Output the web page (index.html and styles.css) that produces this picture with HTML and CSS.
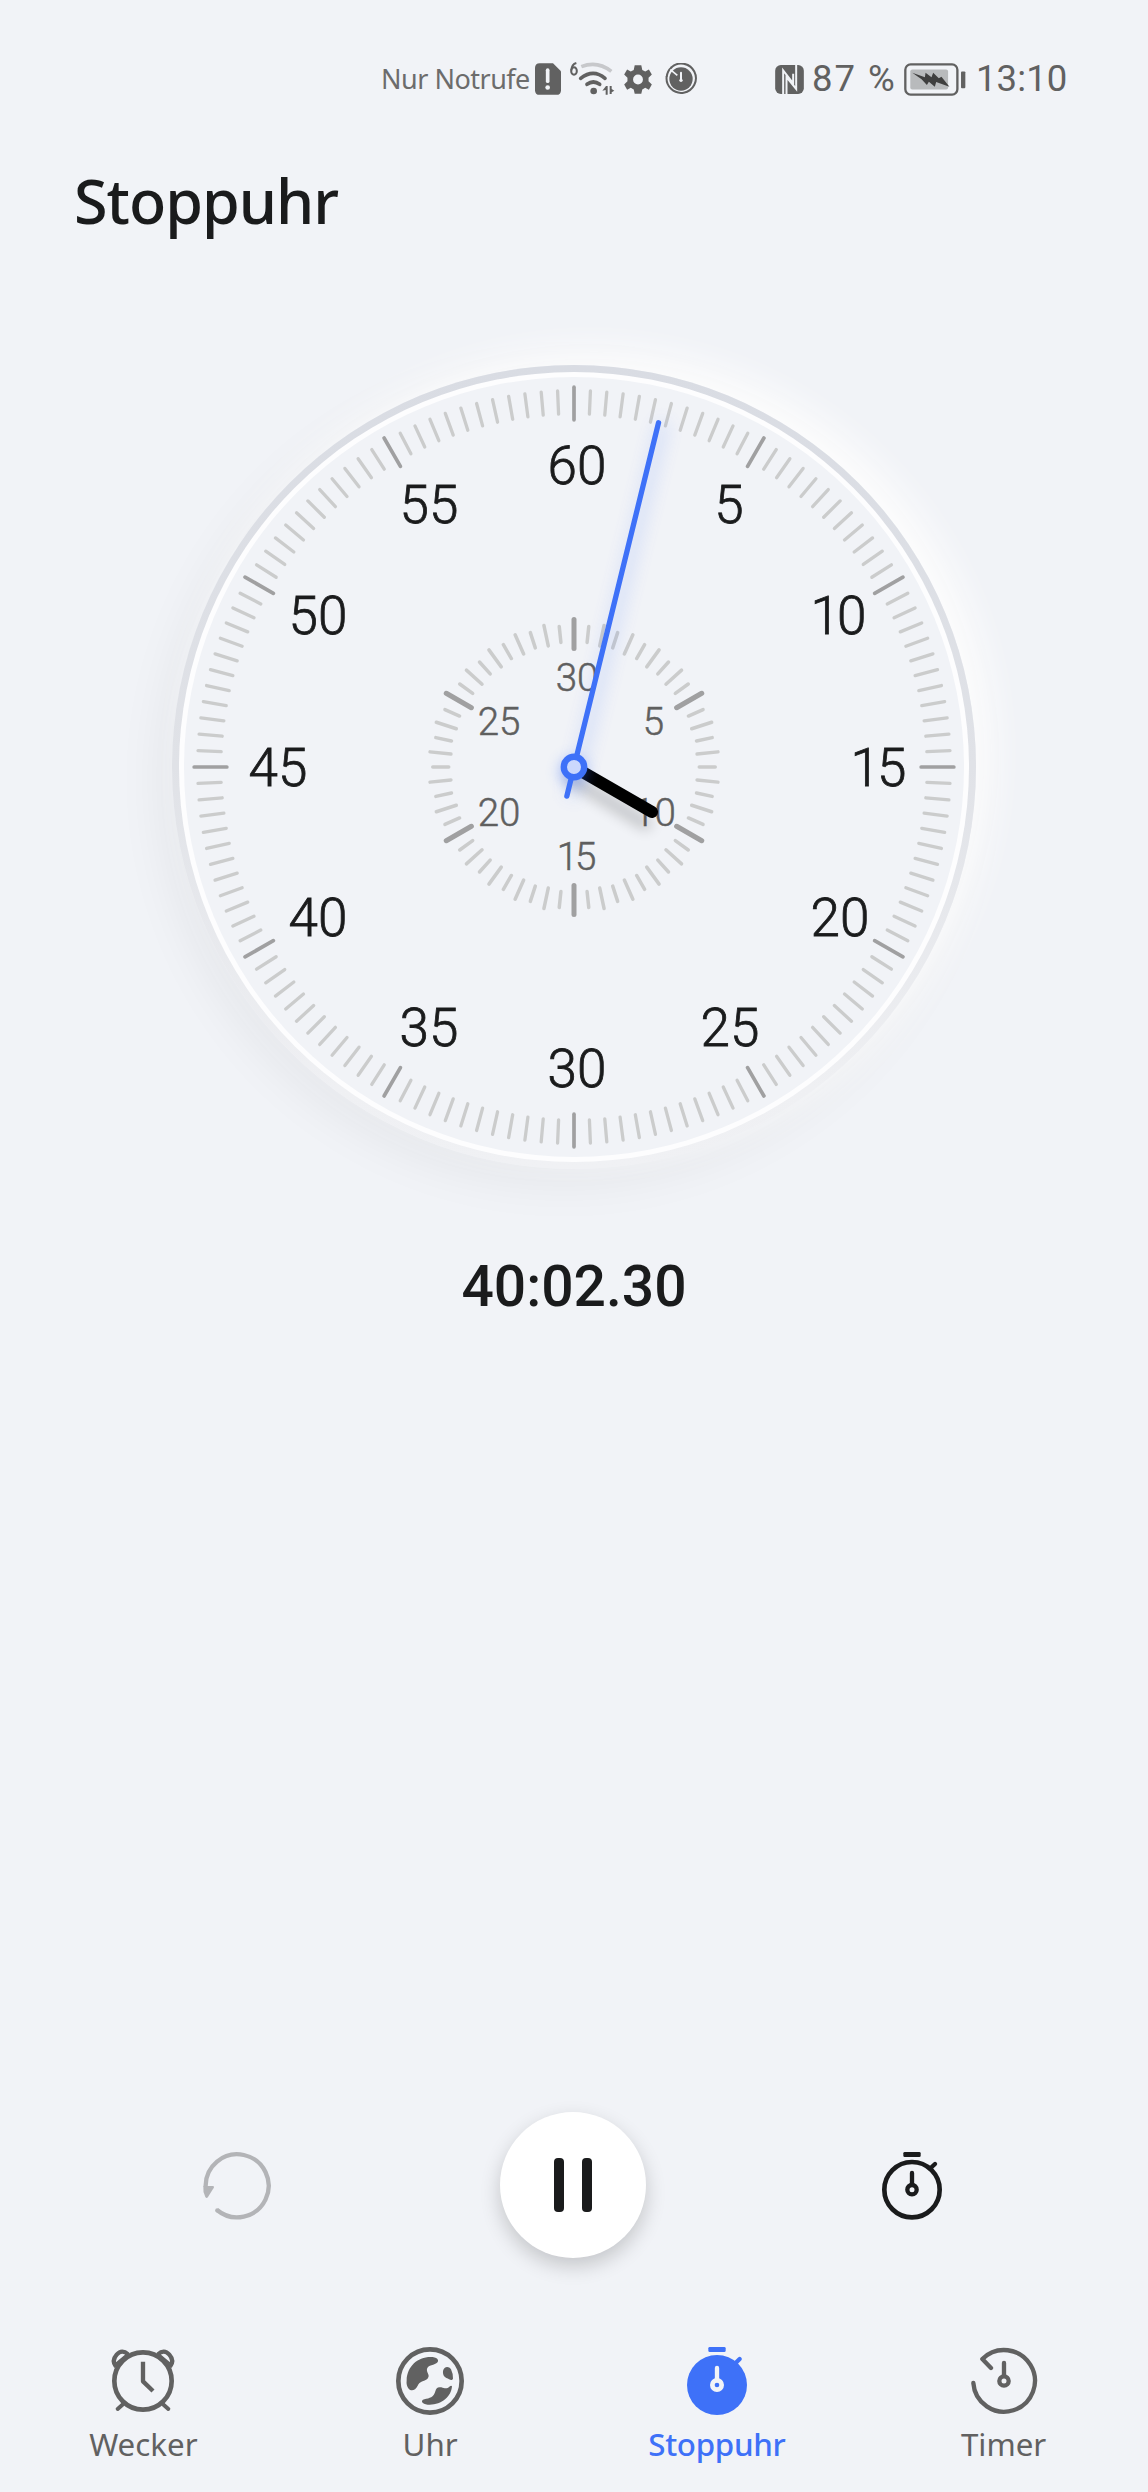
FILE: index.html
```html
<!DOCTYPE html>
<html lang="de">
<head>
<meta charset="utf-8">
<title>Stoppuhr</title>
<link rel="stylesheet" href="styles.css">
</head>
<body>
<div class="screen">
  <header class="status">
    <div class="status-left">
      <span class="carrier">Nur Notrufe</span>
      <svg class="i-sim" viewBox="495 38 78 95" width="26" height="32">
        <path fill="#616161" d="M509 38H549L573 62V119Q573 133 559 133H509Q495 133 495 119V52Q495 38 509 38Z"/>
        <path stroke="#f1f3f7" stroke-width="11" stroke-linecap="round" d="M533 59V92"/>
        <circle cx="533" cy="111" r="7" fill="#f1f3f7"/>
      </svg>
      <svg class="i-wifi" viewBox="597 32 138 105" width="46" height="35" fill="none">
        <path stroke="#616161" stroke-width="6" d="M619 38Q605 42 604 60"/>
        <ellipse cx="612" cy="62" rx="8.500" ry="11" stroke="#616161" stroke-width="6"/>
        <path stroke="#c7c8cb" stroke-width="11" d="M634 49Q682 30 724 63"/>
        <path stroke="#616161" stroke-width="11" stroke-linecap="round" d="M632 84Q670 54 705 84M651 102Q670 88 689 102"/>
        <circle cx="671" cy="122" r="10" fill="#616161"/>
        <path fill="#616161" d="M697 121L708 107H713V133H707V119ZM719 107H725V116L733 121L725 126V131H719Z"/>
      </svg>
      <svg class="i-gear" viewBox="763 41 84 88" width="28" height="29">
        <path fill="#616161" fill-rule="evenodd" d="M795 42H815L818 56L827 61L838 55L847 70L837 80V90L847 100L838 116L827 110L818 115L815 128H795L792 115L783 110L772 116L763 100L773 90V80L763 70L772 55L783 61L792 56ZM805 70A15 15 0 1 0 805 100A15 15 0 1 0 805 70Z"/>
      </svg>
      <svg class="i-timer" viewBox="887 38 96 96" width="32" height="32" fill="none">
        <circle cx="935" cy="86" r="35" fill="#616161"/>
        <path stroke="#616161" stroke-width="6" d="M905 52A44 44 0 1 1 892 78"/>
        <path stroke="#616161" stroke-width="6" d="M892 80Q894 62 907 51"/>
        <path stroke="#f1f3f7" stroke-width="5" d="M903 58L924 75"/>
        <path stroke="#f1f3f7" stroke-width="6" stroke-linecap="round" d="M935 67V90"/>
        <circle cx="935" cy="90" r="5" fill="#f1f3f7"/>
      </svg>
    </div>
    <div class="status-right">
      <svg class="i-nfc" viewBox="74 42 86 87" width="29" height="29">
        <rect x="74" y="42" width="86" height="87" rx="17" fill="#616161"/>
        <path fill="none" stroke="#f1f3f7" stroke-width="6" d="M98 129V58L128 97V68M108 129V78L137 114V42"/>
      </svg>
      <span class="pct">87 %</span>
      <svg class="i-batt" viewBox="458 37 187 99" width="62" height="33">
        <rect x="462" y="41" width="157" height="91" rx="16" fill="none" stroke="#616161" stroke-width="7"/>
        <rect x="477" y="56" width="114" height="61" rx="6" fill="#b8babc"/>
        <rect x="630" y="62" width="13" height="51" rx="3" fill="#616161"/>
        <path fill="#3f3f3f" d="M483 66L521 80L523 66L541 80L546 66L563 83L571 78L595 108L555 94L551 108L533 93L527 103L511 86Z"/>
      </svg>
      <span class="clock">13:10</span>
    </div>
  </header>

  <h1 class="title">Stoppuhr</h1>

  <main class="watch">
    <div class="dial">
      <svg viewBox="0 0 804 804" width="804" height="804">
        <defs>
          <filter id="glow" x="-2000%" y="-20%" width="4100%" height="140%"><feGaussianBlur stdDeviation="9"/></filter>
          <filter id="soft" x="-50%" y="-50%" width="200%" height="200%"><feGaussianBlur stdDeviation="7"/></filter>
        </defs>
        <circle cx="402" cy="402" r="395" fill="#fdfdfe"/>
        <circle cx="402" cy="402" r="390" fill="#f1f3f7"/>
        <g id="ticks" stroke-linecap="round"></g>
        <g class="outer">
          <text x="405" y="119">60</text><text x="557" y="158">5</text>
          <text class="tight" x="665" y="269">10</text><text class="tight" x="705" y="420.500">15</text>
          <text x="668" y="571">20</text><text x="558" y="681">25</text>
          <text x="405" y="722">30</text><text x="257" y="681">35</text>
          <text x="146" y="571">40</text><text x="106" y="420.500">45</text>
          <text x="146" y="269">50</text><text x="257" y="158">55</text>
        </g>
        <g class="inner">
          <text x="405" y="325.500">30</text><text x="481.500" y="370">5</text>
          <text x="482.500" y="461">10</text><text class="tight" x="403" y="505">15</text>
          <text x="327" y="461">20</text><text x="327" y="370">25</text>
        </g>
        <path filter="url(#soft)" opacity=".22" stroke="#000" stroke-width="11" stroke-linecap="round" d="M400 414L474 459"/>
        <path stroke="#000" stroke-width="12" stroke-linecap="round" d="M402 402L480 447"/>
        <g transform="rotate(13.800 402 402)">
          <rect filter="url(#glow)" opacity=".22" fill="#3e71f8" x="402" y="46" width="9" height="386"/>
          <circle filter="url(#soft)" opacity=".35" cx="402" cy="406" r="14" fill="#3e71f8"/>
          <path stroke="#3e71f8" stroke-width="5.300" stroke-linecap="round" d="M402 47.500V432"/>
        </g>
        <circle cx="402" cy="402" r="10.200" fill="#cbd8fd" stroke="#3e71f8" stroke-width="6.400"/>
      </svg>
    </div>
    <div class="elapsed">40:02.30</div>
  </main>

  <div class="controls">
    <button class="ctl" aria-label="Zurücksetzen">
      <svg viewBox="0 0 300 300" width="100" height="100" fill="none">
        <path stroke="#b3b4b7" stroke-width="13" d="M47 140A94.500 94.500 0 1 1 81 210"/>
        <circle cx="82" cy="211" r="6.500" fill="#b3b4b7"/>
        <path fill="#b3b4b7" d="M40 138H68Q74 138 71 144L54 171Q50 177 46 171Q38 155 40 138Z"/>
      </svg>
    </button>
    <button class="pause" aria-label="Pause"><span></span><span></span></button>
    <button class="ctl" aria-label="Runde">
      <svg viewBox="0 0 300 300" width="100" height="100" fill="none" stroke="#1a1b1c">
        <circle cx="156" cy="149" r="83" stroke-width="14"/>
        <rect x="130" y="36" width="52" height="15" rx="4" fill="#1a1b1c" stroke="none"/>
        <path stroke-width="13" stroke-linecap="round" d="M156 99V134M212 84L225 72"/>
        <circle cx="156" cy="149" r="14" stroke-width="13"/>
      </svg>
    </button>
  </div>

  <nav class="tabs">
    <a class="tab">
      <svg viewBox="144 78 210 210" width="70" height="70" fill="none" stroke="#616161" stroke-width="14">
        <circle cx="249" cy="183" r="86"/>
        <path stroke-width="13" d="M168 140Q154 122 170 104T204 103M330 140Q344 122 328 104T294 103M165 138L208 102M333 138L290 102"/>
        <path stroke-linecap="round" stroke-width="12" d="M189 253L173 267M309 253L325 267"/>
        <path stroke-width="13" stroke-linejoin="round" d="M249 125V184L279 213"/>
      </svg>
      <span>Wecker</span>
    </a>
    <a class="tab">
      <svg viewBox="1005 78 210 210" width="70" height="70" fill="#616161">
        <circle cx="1110" cy="183" r="95" fill="none" stroke="#616161" stroke-width="14"/>
        <path d="M1040 180C1042 138 1074 108 1118 111C1135 113 1139 124 1129 130C1118 137 1098 136 1101 153C1104 164 1110 167 1102 177C1092 184 1079 184 1073 197C1066 211 1054 215 1046 206Q1038 197 1040 180Z"/>
        <path d="M1149 153C1152 139 1166 137 1173 148Q1179 160 1179 176C1175 184 1168 177 1159 174Q1147 168 1149 153Z"/>
        <path d="M1176 199C1174 231 1142 257 1103 254C1086 253 1080 242 1093 238C1109 235 1121 232 1126 214C1129 203 1133 200 1144 202C1158 207 1162 205 1168 200Q1174 195 1176 199Z"/>
      </svg>
      <span>Uhr</span>
    </a>
    <a class="tab active">
      <svg viewBox="246 78 210 210" width="70" height="70">
        <circle cx="351" cy="195" r="90" fill="#3e71f8"/>
        <rect x="325" y="81" width="52" height="15" rx="4" fill="#3e71f8"/>
        <path stroke="#3e71f8" stroke-width="13" stroke-linecap="round" d="M406 130L419 117"/>
        <path stroke="#f1f3f7" stroke-width="13" stroke-linecap="round" d="M351 144V180"/>
        <circle cx="351" cy="195" r="14" fill="none" stroke="#f1f3f7" stroke-width="14"/>
      </svg>
      <span>Stoppuhr</span>
    </a>
    <a class="tab">
      <svg viewBox="1107 78 210 210" width="70" height="70" fill="none" stroke="#616161" stroke-width="13">
        <path stroke-linecap="round" stroke-linejoin="round" d="M1120 189A92.500 92.500 0 1 0 1147 117L1173 144"/>
        <path stroke-linecap="round" d="M1212 129V165"/>
        <circle cx="1212" cy="183" r="14"/>
      </svg>
      <span>Timer</span>
    </a>
  </nav>
</div>
<script src="dial.js"></script>
</body>
</html>
```
FILE: styles.css
```css
* { box-sizing: border-box; }

body {
  margin: 0;
  background: #f1f3f7;
  font-family: "Noto Sans", sans-serif;
  color: #1a1b1c;
}

.screen {
  width: 1148px;
  height: 2492px;
  display: flex;
  flex-direction: column;
}

svg { display: block; flex: none; }

.status {
  height: 158px;
  padding: 0 79px 0 381px;
  display: flex;
  justify-content: space-between;
  align-items: center;
  color: #616161;
}

.status-left,
.status-right { display: flex; align-items: center; white-space: nowrap; }

.carrier { font-size: 27px; color: #6c6c6c; width: 154px; line-height: 40px; letter-spacing: -.5px; }
.i-wifi { margin-left: 8px; margin-top: -2px; }
.i-gear { margin-left: 9px; }
.i-timer { margin-left: 13px; }

.pct,
.clock {
  font-family: Roboto, sans-serif;
  font-size: 36.500px;
  line-height: 40px;
}

.pct { width: 92px; margin-left: 8px; letter-spacing: 2px; }
.clock { width: 93px; margin-left: 10px; letter-spacing: .1px; }

.title {
  margin: 0;
  padding-left: 74px;
  height: 207px;
  font-size: 61px;
  font-weight: 500;
  line-height: 86px;
  letter-spacing: -1px;
}

.watch {
  height: 1734px;
  display: flex;
  flex-direction: column;
  align-items: center;
}

.dial {
  width: 804px;
  height: 804px;
  border-radius: 50%;
  background: linear-gradient(#d9dce3, #e0e2e7 50%, #eff0f3 90%, #f0f1f4);
  box-shadow: 16px -14px 34px #fdfdfd, -10px 12px 50px rgba(40, 40, 40, .06);
}

.dial text { font-family: Roboto, sans-serif; text-anchor: middle; }
.outer { font-size: 53px; font-weight: 350; fill: #1a1b1c; stroke: #1a1b1c; stroke-width: .8px; }
.inner { font-size: 38.500px; font-weight: 350; fill: #5f5f5f; stroke: #5f5f5f; stroke-width: .5px; }
.dial .tight { letter-spacing: -3px; }

.elapsed {
  margin-top: 84px;
  font: 500 57px/68px Roboto, sans-serif;
}

.controls {
  height: 172px;
  padding-left: 190px;
  display: flex;
  align-items: center;
}

button { border: 0; padding: 0; background: none; }
.ctl { width: 100px; height: 100px; margin-top: 10px; }

.pause {
  margin: 0 214px 0 210px;
  width: 146px;
  height: 146px;
  border-radius: 50%;
  background: #fff;
  box-shadow: 0 8px 20px rgba(0, 0, 0, .19);
  display: flex;
  justify-content: center;
  align-items: center;
  gap: 18px;
}

.pause span { width: 10px; height: 54px; border-radius: 4px; background: #1a1b1c; }

.tabs {
  height: 221px;
  padding: 75px 1px 0 0;
  display: grid;
  grid-template-columns: repeat(4, 1fr);
}

.tab {
  display: flex;
  flex-direction: column;
  align-items: center;
  font-size: 31.300px;
  line-height: 42px;
  color: #616161;
}

.tab span { margin-top: 7px; }
.active { color: #3e71f8; font-weight: 500; letter-spacing: -.3px; }
```
FILE: dial.js
```js
// Draws one radial tick on the dial, `angle` in degrees clockwise from the top.
const NS = "http://www.w3.org/2000/svg";
const group = document.getElementById("ticks");

function tick(angle, outer, inner, width, color) {
  const line = document.createElementNS(NS, "line");
  line.setAttribute("x1", 402);
  line.setAttribute("x2", 402);
  line.setAttribute("y1", 402 - outer + width / 2);
  line.setAttribute("y2", 402 - inner - width / 2);
  line.setAttribute("stroke", color);
  line.setAttribute("stroke-width", width);
  line.setAttribute("transform", `rotate(${angle} 402 402)`);
  group.appendChild(line);
}

for (let i = 0; i < 144; i++) {
  if (i % 12 === 0) tick(i * 2.5, 381.7, 345.3, 3.7, "#a0a0a1");
  else tick(i * 2.5, 378, 351.5, 3.3, "#cbcccc");
}

for (let i = 0; i < 60; i++) {
  if (i % 10 === 0) tick(i * 6, 150, 116, 5, "#a0a0a1");
  else tick(i * 6, i % 2 ? 143 : 146.5, i % 2 ? 123.5 : 122, 3.5, "#cbcccc");
}
```
